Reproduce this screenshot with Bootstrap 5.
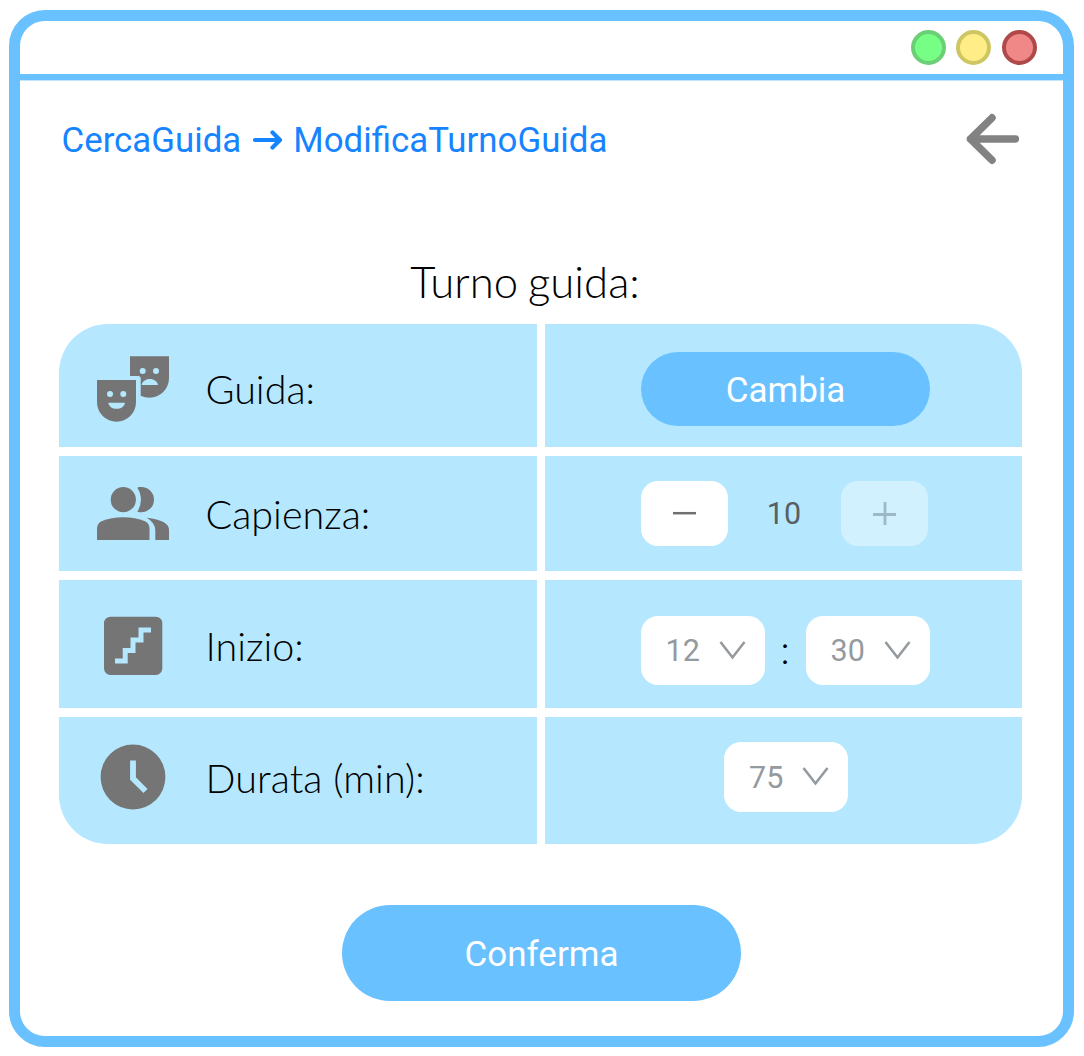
<!DOCTYPE html>
<html lang="it">
<head>
<meta charset="utf-8">
<meta name="viewport" content="width=device-width, initial-scale=1">
<title>ModificaTurnoGuida</title>
<link href="https://cdn.jsdelivr.net/npm/bootstrap@5.3.0/dist/css/bootstrap.min.css" rel="stylesheet">
<style>
body{background:#fff;font-family:Roboto,"Liberation Sans",sans-serif;padding:10px 10px 9px 9px;height:1056px}
.win{width:1065px;height:1037px;border:11px solid #69c1ff;border-radius:36px;background:#fff}
.win-bar{height:59px;border-bottom:6px solid #69c1ff;box-shadow:0 1px 0 #c3e6ff;padding-right:26px}
.dot{width:35px;height:35px;border-radius:50%;border:4px solid}
.dot-g{background:#77ff85;border-color:#6bcf76;margin-right:10px}
.dot-y{background:#ffee88;border-color:#cdc663;margin-right:11px}
.dot-r{background:#f08888;border-color:#b04a4a}
.crumbs{height:118px;padding:0 43px 0 41.5px}
.crumbs a{color:#1684ff;font-size:34.85px;line-height:40px;padding-top:3px}
.crumb-sep{margin:2px 10px 0 10px}
.lato{font-family:Lato,sans-serif;font-weight:300;color:#000;white-space:nowrap}
.form-title{font-size:43.7px;line-height:54px;margin:56px 0 0 -33px;padding-bottom:16px;word-spacing:-2px}
.sheet{width:963px;margin-left:39px;border-radius:49px;overflow:hidden;row-gap:9px}
.line{column-gap:8px}
.cell{background:#b5e8ff}
.cell-l{width:478px;padding-left:38px}
.cell-r{width:477px;padding-left:3px}
.ico{width:72px;margin-right:36.5px;fill:#757575;flex:none}
.lbl{font-size:39.5px;line-height:48px}
.r1{height:123px}.r2{height:115px}.r3{height:128px}.r4{height:127px}
.r1 .cell{padding-top:6px}
.r1 .lbl{padding-top:1px}
.r2 .cell-r{padding-left:1px}
.r3 .cell-l{padding-top:2px}
.r3 .lbl{padding-top:2px}
.r3 .cell-r{padding-top:13px}
.r4 .cell-r{padding-left:5px;padding-bottom:7px}
.r4 .lbl{padding-bottom:6px;letter-spacing:.1px}
.pill{background:#69c1ff;color:#fff;border:0;font-size:35px;line-height:40px;padding:4px 0 0}
.pill-sm{width:289px;height:74px;padding-left:1px}
.pill-lg{width:399px;height:96px;margin-top:61px}
.step{width:87px;height:65px;border-radius:17px;border:0;background:#fff;padding:0 0 0 1px}
.step-off{background:#d2f1ff}
.num{width:113px;font-size:30.5px;line-height:36px;color:#575f63;padding-top:1px}
.pick{width:124px;height:69px;border-radius:17px;border:0;background:#fff;color:#949a9e;font-size:30.5px;line-height:36px;padding:1px 19px 0 25px}
.r4 .pick{height:70px}
.r4 .pick svg{margin-bottom:2px}
.colon{width:41px;font-size:40px;line-height:40px;padding-bottom:3px}
svg{display:block}
</style>
<script src="https://cdn.jsdelivr.net/npm/bootstrap@5.3.0/dist/js/bootstrap.bundle.min.js"></script>
</head>
<body>
<main class="win">
  <header class="win-bar d-flex align-items-center justify-content-end">
    <span class="dot dot-g"></span><span class="dot dot-y"></span><span class="dot dot-r"></span>
  </header>
  <nav class="crumbs d-flex align-items-center justify-content-between">
    <div class="d-flex align-items-center">
      <a href="#" class="text-decoration-none">CercaGuida</a>
      <svg class="crumb-sep" width="32" height="22" viewBox="0 0 32 22" fill="none" stroke="#1684ff" stroke-width="4.200" stroke-linecap="round" stroke-linejoin="round"><path d="M4 11H28M21.500 3.500L29 11L21.500 18.500"/></svg>
      <a href="#" class="text-decoration-none">ModificaTurnoGuida</a>
    </div>
    <svg class="back" width="54" height="52" viewBox="0 0 54 52" fill="none" stroke="#828282" stroke-width="7.500" stroke-linecap="round" stroke-linejoin="round"><path fill="#828282" d="M12 19L4.500 26L12 33Z" stroke="none"/><path d="M4.500 26H49.300M26 4.800L4.500 26L26 47.200"/></svg>
  </nav>
  <h1 class="lato form-title text-center">Turno guida:</h1>
  <section class="sheet d-flex flex-column">
    <div class="line r1 d-flex">
      <div class="cell cell-l d-flex align-items-center">
        <svg class="ico" height="66" viewBox="0 0 72 66" fill-rule="evenodd"><path d="M0 24H39V46.200A19.500 19.500 0 0 1 0 46.200ZM10 38a3 3 0 1 0 6 0a3 3 0 1 0 -6 0M23.300 38a3 3 0 1 0 6 0a3 3 0 1 0 -6 0M11.300 46.700H28C27.500 50.500 24 52.800 19.600 52.800S11.800 50.500 11.300 46.700Z"/><path d="M33 0.300H72V22.300A19.500 19.500 0 0 1 52.500 41.700Q48 41.700 43.700 39.700V22.500Q43.700 20 41.200 20H33ZM42.700 15a3 3 0 1 0 6 0a3 3 0 1 0 -6 0M56 15a3 3 0 1 0 6 0a3 3 0 1 0 -6 0M44.700 29H61C60.500 25.200 57 22.900 52.800 22.900S45.200 25.200 44.700 29Z"/></svg>
        <span class="lato lbl">Guida:</span>
      </div>
      <div class="cell cell-r d-flex align-items-center justify-content-center">
        <button class="btn pill pill-sm rounded-pill" type="button">Cambia</button>
      </div>
    </div>
    <div class="line r2 d-flex">
      <div class="cell cell-l d-flex align-items-center">
        <svg class="ico" height="53" viewBox="0 0 72 53"><circle cx="26.300" cy="12.700" r="12.600"/><path d="M40.300 .700C42 .200 43.200 .100 44.400 .100A12.600 12.600 0 0 1 44.400 25.300C43.200 25.300 42 25.200 40.300 24.700Q43.900 19.300 43.900 12.700T40.300 .700Z"/><path d="M0 53V41.500Q0 36.500 4.500 34.300Q14 30.200 26.300 30.200T48 34.300Q52.500 36.500 52.500 41.500V53Z"/><path d="M49.700 30.700Q72 33.500 72 42.500V53H58.300V43.500Q58.300 35.500 49.700 30.700Z"/></svg>
        <span class="lato lbl">Capienza:</span>
      </div>
      <div class="cell cell-r d-flex align-items-center justify-content-center">
        <button class="btn step d-flex align-items-center justify-content-center" type="button"><svg width="23" height="23" viewBox="0 0 23 23"><path d="M0 11.200H23" stroke="#707070" stroke-width="2.500"/></svg></button>
        <span class="num text-center">10</span>
        <span class="step step-off d-flex align-items-center justify-content-center"><svg width="23" height="23" viewBox="0 0 23 23"><path d="M0 12.500H23M12 0V23" stroke="#9cb9c6" stroke-width="2.800"/></svg></span>
      </div>
    </div>
    <div class="line r3 d-flex">
      <div class="cell cell-l d-flex align-items-center">
        <svg class="ico" height="59" viewBox="-7 0 72 59"><rect width="58.300" height="58.300" y=".700" rx="6.500"/><path d="M11 45H21.200V34.600H29V24H37V14H47" fill="none" stroke="#b5e8ff" stroke-width="5"/></svg>
        <span class="lato lbl">Inizio:</span>
      </div>
      <div class="cell cell-r d-flex align-items-center justify-content-center">
        <button class="btn pick d-flex align-items-center justify-content-between" type="button">12<svg width="27" height="20" viewBox="0 0 27 20"><path d="M1.500 1L13.500 16.500L25.500 1" fill="none" stroke="#949a9e" stroke-width="2.600"/></svg></button>
        <span class="colon lato text-center">:</span>
        <button class="btn pick d-flex align-items-center justify-content-between" type="button">30<svg width="27" height="20" viewBox="0 0 27 20"><path d="M1.500 1L13.500 16.500L25.500 1" fill="none" stroke="#949a9e" stroke-width="2.600"/></svg></button>
      </div>
    </div>
    <div class="line r4 d-flex">
      <div class="cell cell-l d-flex align-items-center">
        <svg class="ico mb-2" height="66" viewBox="-3 0 72 66"><circle cx="33" cy="33" r="32.400"/><path d="M33 16.500V34.500L45.500 47" fill="none" stroke="#b5e8ff" stroke-width="5.800"/></svg>
        <span class="lato lbl">Durata (min):</span>
      </div>
      <div class="cell cell-r d-flex align-items-center justify-content-center">
        <button class="btn pick d-flex align-items-center justify-content-between" type="button">75<svg width="27" height="20" viewBox="0 0 27 20"><path d="M1.500 1L13.500 16.500L25.500 1" fill="none" stroke="#949a9e" stroke-width="2.600"/></svg></button>
      </div>
    </div>
  </section>
  <div class="d-flex justify-content-center">
    <button class="btn pill pill-lg rounded-pill" type="button">Conferma</button>
  </div>
</main>
</body>
</html>
